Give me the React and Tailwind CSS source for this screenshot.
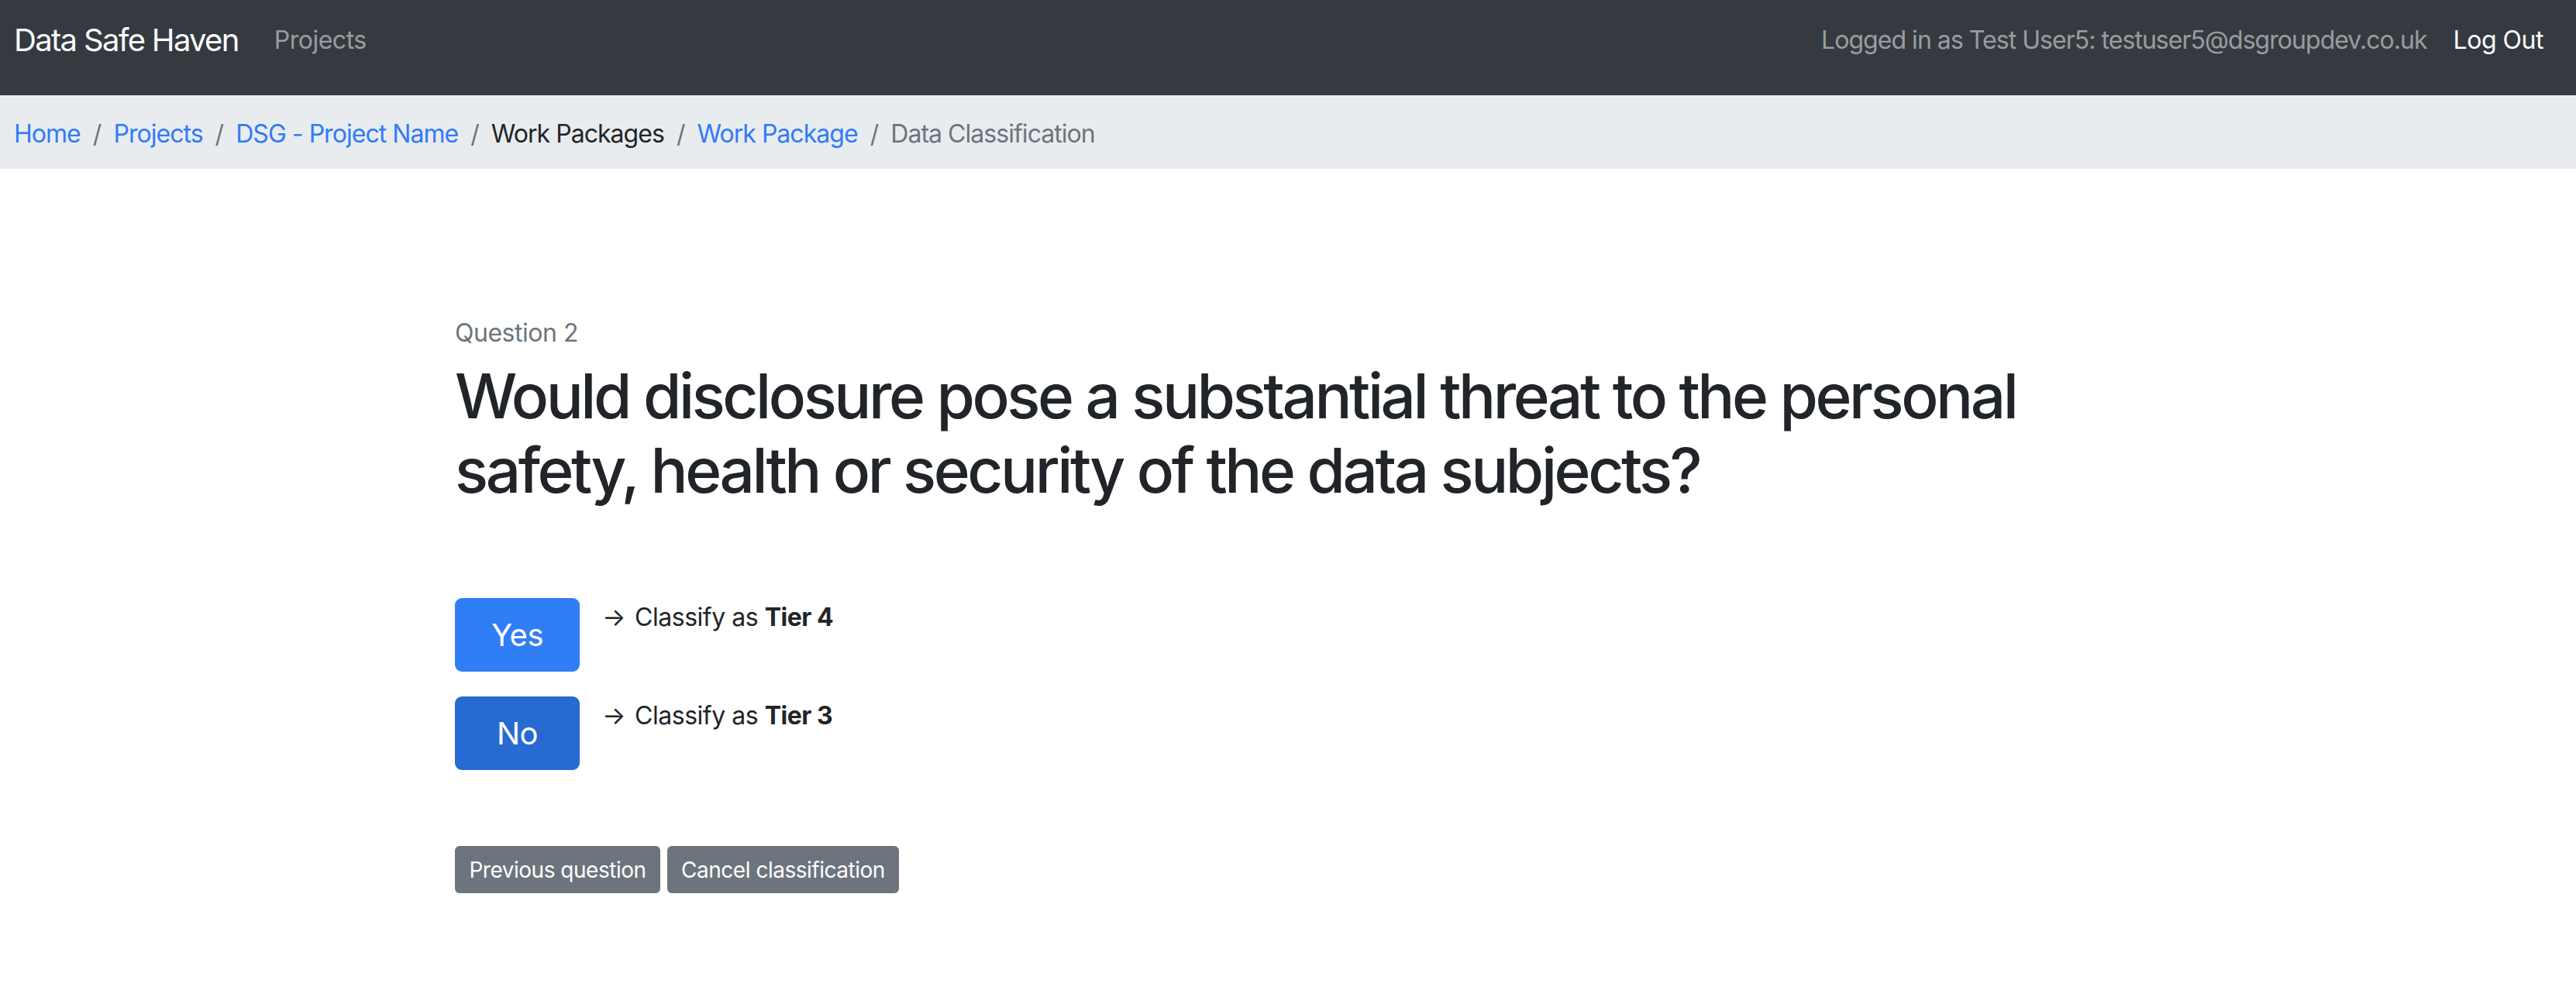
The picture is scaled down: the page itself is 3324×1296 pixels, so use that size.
const crumbs = [
  { label: "Home", href: "#" },
  { label: "Projects", href: "#" },
  { label: "DSG - Project Name", href: "#" },
  { label: "Work Packages" },
  { label: "Work Package", href: "#" },
  { label: "Data Classification", active: true },
];

const answers = [
  { label: "Yes", tier: "Tier 4", color: "bg-[#307ef6]" },
  { label: "No", tier: "Tier 3", color: "bg-[#276ad2]" },
];

const App = () => {
  return (
    <div className="min-h-screen bg-white font-['Inter',sans-serif] tracking-[-0.03em] text-[#212529]">
      {/* Navbar */}
      <nav className="flex h-[123px] items-center justify-between bg-[#343a40] pb-[20px] pl-[18px] pr-[42px]">
        <div className="flex items-center">
          <a href="#" className="mr-[46px] text-[40px] tracking-[-0.042em] text-white">
            Data Safe Haven
          </a>
          <a href="#" className="text-[32px] text-white/50">
            Projects
          </a>
        </div>
        <div className="flex items-center gap-[34px] text-[32px]">
          <span className="tracking-[-0.03em] text-white/50">Logged in as Test User5: testuser5@dsgroupdev.co.uk</span>
          <a href="#" className="text-white">
            Log Out
          </a>
        </div>
      </nav>

      {/* Breadcrumb */}
      <ol className="flex h-[95px] items-center bg-[#e9ecef] px-[18px] pt-[4px] text-[32px] tracking-[-0.03em]">
        {crumbs.map((c, i) => (
          <li key={c.label} className="flex items-center">
            {i > 0 && <span className="px-[16px] text-[#6c757d]">/</span>}
            {c.href ? (
              <a href={c.href} className="text-[#307bf6]">
                {c.label}
              </a>
            ) : (
              <span className={c.active ? "text-[#6c757d]" : "text-[#212529]"}>{c.label}</span>
            )}
          </li>
        ))}
      </ol>

      {/* Question */}
      <main className="mx-auto w-[2150px] pt-[188px]">
        <p className="text-[32px] leading-[48px] text-[#6c757d]">Question 2</p>
        <h1 className="mt-[9px] text-[80px] font-medium leading-[96px] tracking-[-0.043em]">
          Would disclosure pose a substantial threat to the personal safety, health or security of the data subjects?
        </h1>

        <div className="mt-[117px] flex flex-col gap-[32px]">
          {answers.map((a) => (
            <div key={a.label} className="flex items-start gap-[29px]">
              <button className={`h-[95px] w-[161px] rounded-[9px] text-[40px] text-white ${a.color}`}>{a.label}</button>
              <p className="mt-[1px] text-[32px] leading-[48px]">
                <span className="mr-[12px]">→</span>
                Classify as <strong className="font-bold">{a.tier}</strong>
              </p>
            </div>
          ))}
        </div>

        <div className="mt-[98px] flex gap-[9px]">
          <button className="h-[61px] w-[265px] rounded-[6px] bg-[#6c757d] text-[28px] text-white">Previous question</button>
          <button className="h-[61px] w-[299px] rounded-[6px] bg-[#6c757d] text-[28px] text-white">Cancel classification</button>
        </div>
      </main>
    </div>
  );
};

export default App;
